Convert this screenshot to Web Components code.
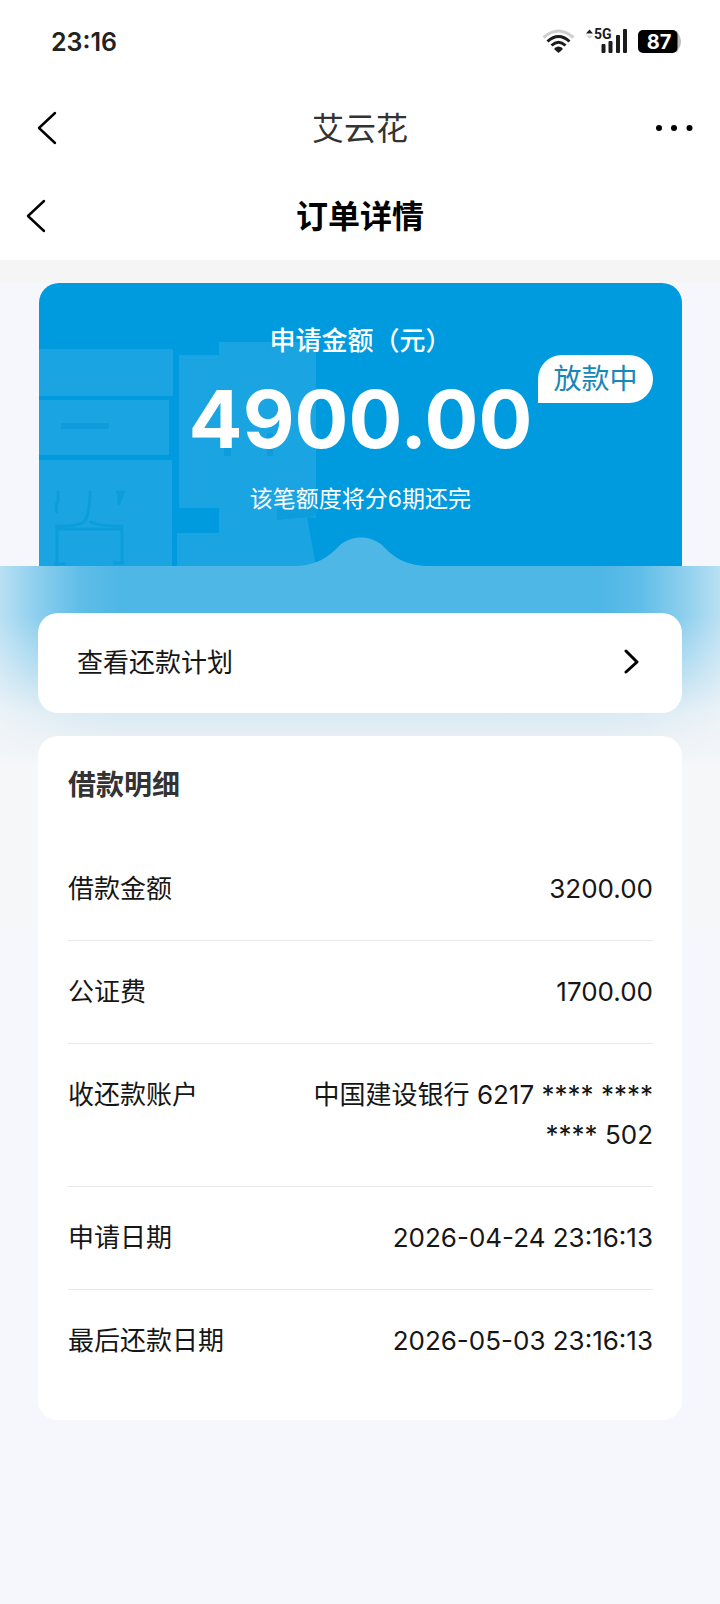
<!DOCTYPE html>
<html lang="zh-CN">
<head>
<meta charset="utf-8">
<meta name="viewport" content="width=device-width, initial-scale=1">
<title>订单详情</title>
<style>
  html { background: #f5f7fc; }
  body {
    margin: 0;
    font-family: Inter, "Noto Sans CJK SC", sans-serif;
    color: #161616;
  }
</style>
</head>
<body>
<order-page></order-page>

<script>
const define = (name, html) => {
  const template = document.createElement('template');
  template.innerHTML = html;
  customElements.define(name, class extends HTMLElement {
    constructor() {
      super();
      this.attachShadow({ mode: 'open' }).append(template.content.cloneNode(true));
    }
  });
};

define('status-bar', `
<style>
  :host { display: flex; align-items: center; justify-content: space-between; height: 84px; padding: 0 38px 0 51px; background: #fff; }
  .time { font-size: 25px; font-weight: 600; line-height: 32px; color: #222; }
  svg { display: block; }
</style>
<div class="time">23:16</div>
<svg width="140" height="32" viewBox="0 0 140 32" role="img" aria-label="WiFi 5G 87%">
  <g fill="none">
    <path d="M1.500 11.500Q16.500-1.500 31.500 11.500" stroke="#cfcfcf" stroke-width="3"/>
    <path d="M5.500 15.500Q16.500 5.500 27.500 15.500" stroke="#1c1c1c" stroke-width="3"/>
    <path d="M9.500 19.500Q16.500 13 23.500 19.500" stroke="#1c1c1c" stroke-width="3"/>
  </g>
  <path d="M12.500 22Q16.500 18.800 20.500 22L20.500 23.500L16.500 27L12.500 23.500Z" fill="#1c1c1c"/>
  <path d="M44 7.500L47.500 3.500L51 7.500Z" fill="#1c1c1c"/>
  <path d="M44 9.500L47.500 12.500L51 9.500Z" fill="#cfcfcf"/>
  <text x="52" y="13" font-family="Roboto, sans-serif" font-weight="700" font-size="14" fill="#1c1c1c">5G</text>
  <g fill="#1c1c1c">
    <rect x="59.500" y="18" width="4" height="9" rx="1"/>
    <rect x="66.500" y="15" width="4" height="12" rx="1"/>
    <rect x="74" y="9" width="4" height="18" rx="1"/>
    <rect x="81" y="3" width="4" height="24" rx="1"/>
  </g>
  <path d="M134 4.500Q136 5 136.500 8Q139 11 139 15.500Q139 20 136.500 23Q136 26 134 26.500Z" fill="#bcbcbc"/>
  <rect x="96" y="4" width="39.500" height="23" rx="5" fill="#000"/>
  <text x="117" y="23" text-anchor="middle" font-family="Inter, sans-serif" font-weight="700" font-size="20" fill="#fff">87</text>
</svg>
`);

define('app-bar', `
<style>
  :host { display: grid; grid-template-columns: 80px 1fr 80px; align-items: center; height: 88px; background: #fff; }
  .title { grid-column: 2; padding-top: 2px; text-align: center; font-size: 32px; line-height: 40px; color: #333; }
  :host([strong]) .title { font-weight: 700; color: #000; }
  button { border: 0; padding: 0; background: none; height: 60px; display: flex; align-items: center; }
  .back { padding-left: 36px; }
  :host([strong]) .back { padding-left: 25px; }
  .more { justify-content: flex-end; padding-right: 26px; }
  :host([strong]) .more { display: none; }
  svg { display: block; }
</style>
<button class="back" type="button" aria-label="返回">
  <svg width="22" height="36" viewBox="0 0 22 36" fill="none" stroke="#000" stroke-width="2.400" stroke-linecap="round" stroke-linejoin="round"><path d="M19 3L3 18L19 33"/></svg>
</button>
<div class="title"><slot></slot></div>
<button class="more" type="button" aria-label="更多">
  <svg width="40" height="8" viewBox="0 0 40 8"><circle cx="5" cy="4" r="3"/><circle cx="20" cy="4" r="3"/><circle cx="35.500" cy="4" r="3"/></svg>
</button>
`);

define('amount-card', `
<style>
  :host { display: block; position: relative; box-sizing: border-box; height: 283px; padding-top: 38px; border-radius: 20px 20px 0 0; overflow: hidden; background: #009bdf; color: #fff; text-align: center; }
  .mark { position: absolute; left: 0; top: 0; }
  .bump { position: absolute; left: 0; right: 0; bottom: 0; margin: 0 auto; }
  .content { position: relative; }
  .label { font-size: 26px; line-height: 40px; font-weight: 500; }
  .amount { margin-top: 12px; font-size: 80px; line-height: 92px; font-weight: 700; }
  .note { margin-top: 14px; font-size: 23px; line-height: 40px; }
  .badge { position: absolute; right: 29px; top: 72px; box-sizing: border-box; width: 115px; height: 48px; line-height: 48px; border-radius: 24px 24px 24px 0; background: #fff; color: #1787b6; font-size: 28px; }
  svg { display: block; }
</style>
<svg class="mark" width="290" height="283" viewBox="0 0 290 283" aria-hidden="true">
  <g fill="#1aa4e2">
    <path d="M0 66H134V113H0Z"/>
    <path d="M0 117H130V172H0Z"/>
    <path d="M0 177H133V283H0Z"/>
    <path d="M140 72H180V59H277V235L268 234L277 283H138V250H180V225H140Z"/>
  </g>
  <g fill="#0d9ddd">
    <path d="M22 140H70V146H22Z"/>
    <path d="M185 123H192V173H185Z"/>
    <path d="M228 150H234V173H228Z"/>
    <path d="M238 225H277V233L238 237Z"/>
  </g>
  <g fill="none" stroke="#0d9ddd" stroke-width="3">
    <path d="M19 208V218Q16 222 18 230M16 243Q40 244 46 238Q51 228 51 208M51 238Q54 243 84 243M80 208V222M85 208L80 220M77 209H85"/>
    <path d="M18 242V283M83 242V280M18 246H83M15 281H27M74 280H85"/>
  </g>
</svg>
<svg class="bump" width="132" height="29" viewBox="0 0 132 29" aria-hidden="true">
  <path d="M0 29C26 28 36 17 45 8C57-2 75-2 87 8C96 17 106 28 132 29Z" fill="#4fb7e6"/>
</svg>
<div class="content">
  <div class="label">申请金额（元）</div>
  <div class="amount">4900.00</div>
  <div class="note">该笔额度将分6期还完</div>
</div>
<div class="badge">放款中</div>
`);

define('plan-link', `
<style>
  :host { display: block; }
  a { display: flex; align-items: center; justify-content: space-between; height: 100px; padding: 0 40px 0 39px; border-radius: 20px; background: #fff; color: #161616; text-decoration: none; font-size: 26px; line-height: 40px; }
  svg { display: block; }
</style>
<a href="#plan"><slot></slot>
  <svg width="20" height="28" viewBox="0 0 20 28" fill="none" stroke="#000" stroke-width="3" stroke-linecap="round" stroke-linejoin="round"><path d="M4 2L15 13L4 23"/></svg>
</a>
`);

define('detail-row', `
<style>
  :host { display: flex; justify-content: space-between; padding: 31px 0; border-bottom: 1px solid #e8e8e8; font-size: 26px; line-height: 40px; }
  :host(:last-of-type) { border-bottom: 0; }
  .value { width: 360px; text-align: right; }
</style>
<div><slot name="label"></slot></div>
<div class="value"><slot></slot></div>
`);

define('detail-card', `
<style>
  :host { display: block; padding: 29px 29px 28px 30px; border-radius: 20px; background: #fff; }
  h2 { margin: 0 0 33px; font-size: 28px; line-height: 40px; font-weight: 700; color: #333; }
</style>
<h2><slot name="title"></slot></h2>
<slot></slot>
`);

define('order-page', `
<style>
  :host { display: block; }
  .strip { height: 23px; background: #f5f5f5; }
  .hero { padding: 0 38px 0 39px; }
  .body {
    display: flex; flex-direction: column; gap: 23px; padding: 47px 38px 40px;
    background:
      linear-gradient(90deg, rgba(245,247,250,.64), rgba(245,247,250,.36) 38px, rgba(245,247,250,.1) 80px, rgba(245,247,250,0) 120px, rgba(245,247,250,0) calc(100% - 120px), rgba(245,247,250,.1) calc(100% - 80px), rgba(245,247,250,.36) calc(100% - 38px), rgba(245,247,250,.64)) top / 100% 200px no-repeat,
      linear-gradient(#4fb7e6 0, #4fb7e6 50px, #86cbec 92px, #b3dbee 122px, #d9eaf3 147px, #e6eff4 170px, #f5f7f9 200px, #f5f7f9 355px, #f5f7fc 365px);
  }
</style>
<status-bar></status-bar>
<app-bar>艾云花</app-bar>
<app-bar strong>订单详情</app-bar>
<div class="strip"></div>
<div class="hero"><amount-card></amount-card></div>
<div class="body">
  <plan-link>查看还款计划</plan-link>
  <detail-card>
    <span slot="title">借款明细</span>
    <detail-row><span slot="label">借款金额</span>3200.00</detail-row>
    <detail-row><span slot="label">公证费</span>1700.00</detail-row>
    <detail-row><span slot="label">收还款账户</span>中国建设银行 6217 **** **** **** 502</detail-row>
    <detail-row><span slot="label">申请日期</span>2026-04-24 23:16:13</detail-row>
    <detail-row><span slot="label">最后还款日期</span>2026-05-03 23:16:13</detail-row>
  </detail-card>
</div>
`);
</script>
</body>
</html>
